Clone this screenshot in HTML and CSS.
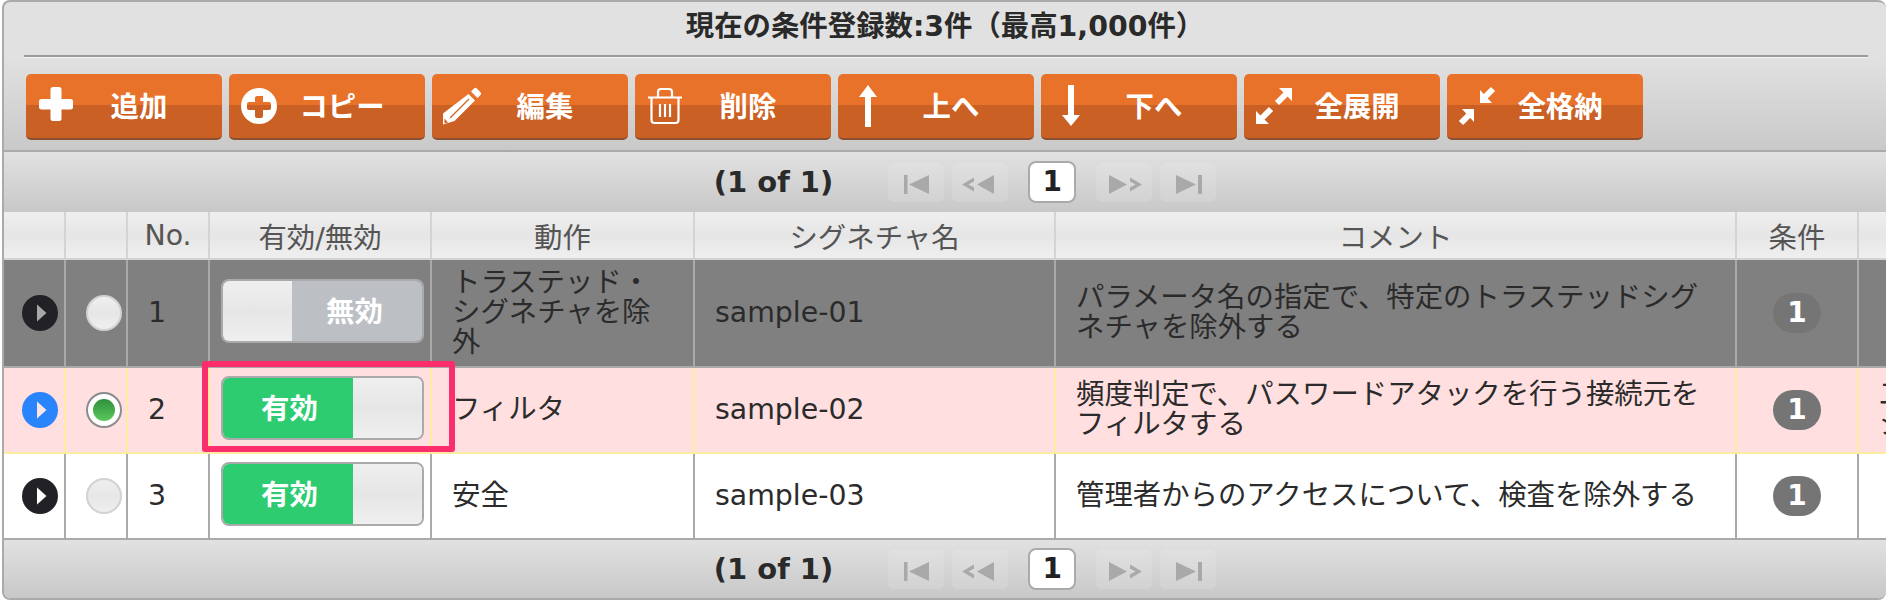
FILE: index.html
```html
<!DOCTYPE html>
<html lang="ja">
<head>
  <meta charset="UTF-8">
  <title>条件一覧</title>
  <link rel="stylesheet" href="styles.css">
</head>
<body>
  <svg class="defs" width="0" height="0">
    <symbol id="pg-first" viewBox="0 0 56 39"><path d="M16 12h3.500v19H16zM21 21.500 41 12v19z"/></symbol>
    <symbol id="pg-prev" viewBox="0 0 56 39"><path d="M42 12v19L25 21.500zM22 14.500l-12 7 12 7v-4l-5.500-3 5.500-3z"/></symbol>
    <symbol id="pg-next" viewBox="0 0 56 39"><path d="M13 12v19l18-9.500zM34 14.500l12 7-12 7v-4l5.500-3-5.500-3z"/></symbol>
    <symbol id="pg-last" viewBox="0 0 56 39"><path d="M16 12v19l20-9.500zM38 12h4v19h-4z"/></symbol>
    <symbol id="expander" viewBox="0 0 36 36"><circle cx="18" cy="18" r="18" fill="currentColor"/><path class="expander-arrow" d="M15 9.500l9.500 8.500-9.500 8.500z"/></symbol>
  </svg>

  <div class="panel">
    <h2 class="panel-title">現在の条件登録数:3件（最高1,000件）</h2>
    <div class="title-rule"></div>

    <div class="toolbar">
      <button class="btn">
        <svg class="btn-icon" viewBox="0 0 42 44"><rect x="4" y="15" width="34" height="10.500" rx="2.500"/><rect x="15.500" y="3" width="11" height="34" rx="2.500"/></svg>
        <span class="btn-label">追加</span>
      </button>
      <button class="btn">
        <svg class="btn-icon" viewBox="0 0 42 44"><path fill-rule="evenodd" d="M21 4a18 18 0 1 0 0 36a18 18 0 1 0 0-36zM17 12h8v6h6a2 2 0 0 1 2 2v4a2 2 0 0 1-2 2h-6v6a2 2 0 0 1-2 2h-4a2 2 0 0 1-2-2v-6h-6a2 2 0 0 1-2-2v-4a2 2 0 0 1 2-2h6v-4a2 2 0 0 1 2-2z"/></svg>
        <span class="btn-label">コピー</span>
      </button>
      <button class="btn">
        <svg class="btn-icon" viewBox="0 0 42 44"><path d="M33 4.500a2 2 0 0 1 2.800 0l3.700 3.700a2 2 0 0 1 0 2.800l-3 3-6.500-6.500zM27.500 10 34 16.500 13.500 37l-11.500 3.500V29.500z"/><path class="pencil-line" d="M28 15 9 34"/><path class="pencil-tip" d="M3.500 34.500l3.500 4-3.500 1z"/></svg>
        <span class="btn-label">編集</span>
      </button>
      <button class="btn">
        <svg class="btn-icon icon-line" viewBox="0 0 42 44"><path d="M4 13.500h34M14 13.500V8a3 3 0 0 1 3-3h8a3 3 0 0 1 3 3v5.500M7.500 13.500V36a3 3 0 0 0 3 3h21a3 3 0 0 0 3-3V13.500M16 20v13M21 20v13M26 20v13"/></svg>
        <span class="btn-label">削除</span>
      </button>
      <button class="btn">
        <svg class="btn-icon" viewBox="0 0 42 44"><path d="M21 1l9 12h-6v30h-6V13h-6z"/></svg>
        <span class="btn-label">上へ</span>
      </button>
      <button class="btn">
        <svg class="btn-icon" viewBox="0 0 42 44"><path d="M18 1h6v30h6l-9 11-9-11h6z"/></svg>
        <span class="btn-label">下へ</span>
      </button>
      <button class="btn">
        <svg class="btn-icon" viewBox="0 0 42 44"><path d="M26 4h13v13zM3 40V27l13 13z"/><path class="icon-shaft" d="M33 10l-9 9M9 34l9-9"/></svg>
        <span class="btn-label">全展開</span>
      </button>
      <button class="btn">
        <svg class="btn-icon" viewBox="0 0 42 44"><path d="M24 19V6l12 13zM18 25v13L6 25z"/><path class="icon-shaft" d="M28 14l9-9M14 30l-9 9"/></svg>
        <span class="btn-label">全格納</span>
      </button>
    </div>

    <div class="pager pager-top">
      <span class="pager-count">(1 of 1)</span>
      <span class="pg-btn"><svg><use href="#pg-first"/></svg></span>
      <span class="pg-btn"><svg><use href="#pg-prev"/></svg></span>
      <span class="pg-page">1</span>
      <span class="pg-btn"><svg><use href="#pg-next"/></svg></span>
      <span class="pg-btn"><svg><use href="#pg-last"/></svg></span>
    </div>

    <table class="rules">
      <colgroup>
        <col class="c-expand"><col class="c-radio"><col class="c-no"><col class="c-toggle">
        <col class="c-action"><col class="c-name"><col class="c-comment"><col class="c-cond"><col class="c-rest">
      </colgroup>
      <thead>
        <tr>
          <th></th><th></th><th>No.</th><th>有効/無効</th><th>動作</th><th>シグネチャ名</th><th>コメント</th><th>条件</th><th></th>
        </tr>
      </thead>
      <tbody>
        <tr class="row-off">
          <td class="cell-icon"><svg class="expander"><use href="#expander"/></svg></td>
          <td class="cell-radio"><span class="radio"></span></td>
          <td>1</td>
          <td class="cell-toggle">
            <div class="toggle"><span class="toggle-knob"></span><span class="toggle-off">無効</span></div>
          </td>
          <td>トラステッド・シグネチャを除外</td>
          <td>sample-01</td>
          <td>パラメータ名の指定で、特定のトラステッドシグネチャを除外する</td>
          <td class="cell-badge"><span class="badge">1</span></td>
          <td></td>
        </tr>
        <tr class="row-selected">
          <td class="cell-icon"><svg class="expander"><use href="#expander"/></svg></td>
          <td class="cell-radio"><span class="radio radio-on"></span></td>
          <td>2</td>
          <td class="cell-toggle">
            <div class="toggle"><span class="toggle-on">有効</span><span class="toggle-knob"></span></div>
          </td>
          <td>フィルタ</td>
          <td>sample-02</td>
          <td>頻度判定で、パスワードアタックを行う接続元をフィルタする</td>
          <td class="cell-badge"><span class="badge">1</span></td>
          <td>二段階で<br>シャット</td>
        </tr>
        <tr class="row-plain">
          <td class="cell-icon"><svg class="expander"><use href="#expander"/></svg></td>
          <td class="cell-radio"><span class="radio"></span></td>
          <td>3</td>
          <td class="cell-toggle">
            <div class="toggle"><span class="toggle-on">有効</span><span class="toggle-knob"></span></div>
          </td>
          <td>安全</td>
          <td>sample-03</td>
          <td>管理者からのアクセスについて、検査を除外する</td>
          <td class="cell-badge"><span class="badge">1</span></td>
          <td></td>
        </tr>
      </tbody>
    </table>

    <div class="pager pager-bottom">
      <span class="pager-count">(1 of 1)</span>
      <span class="pg-btn"><svg><use href="#pg-first"/></svg></span>
      <span class="pg-btn"><svg><use href="#pg-prev"/></svg></span>
      <span class="pg-page">1</span>
      <span class="pg-btn"><svg><use href="#pg-next"/></svg></span>
      <span class="pg-btn"><svg><use href="#pg-last"/></svg></span>
    </div>

    <!-- 赤枠の注釈 -->
    <div class="callout"></div>
  </div>
</body>
</html>
```

FILE: styles.css
```css
* {
  box-sizing: border-box;
}

body {
  margin: 0;
  background: #fff;
  overflow: hidden;
  font-family: "DejaVu Sans", "Noto Sans CJK JP", sans-serif;
  color: #2b2b2b;
}

.defs {
  position: absolute;
}

.panel {
  position: relative;
  width: 1884px;
  height: 600px;
  margin-left: 2px;
  border: 2px solid #aaa;
  border-right: 0;
  border-radius: 8px;
  overflow: hidden;
  background: #e1e1e1;
}

.panel-title {
  height: 53px;
  margin: 0;
  font-size: 28.400px;
  line-height: 50px;
  text-align: center;
  color: #2a2a2a;
}

.title-rule {
  height: 3px;
  margin: 0 18px 0 20px;
  border-top: 2px solid #9a9a9a;
  border-bottom: 1px solid #f4f4f4;
}

/* ツールバー */
.toolbar {
  display: flex;
  gap: 7px;
  height: 94px;
  padding: 16px 0 0 22px;
  border-bottom: 2px solid #aaa;
  background: linear-gradient(#e1e1e1, #c9c9c9);
}

.btn {
  display: flex;
  align-items: center;
  width: 196px;
  height: 66px;
  padding: 0 21px 0 9px;
  border: 0;
  border-bottom: 2px solid #8a5030;
  border-radius: 5px;
  background: linear-gradient(#e8722a 48%, #cb6024 48%);
  font-family: inherit;
  color: #fff;
}

.btn-icon {
  flex: none;
  width: 42px;
  height: 44px;
  fill: #fff;
}

.btn-label {
  flex: 1;
  font-size: 28.400px;
  font-weight: 700;
  text-align: center;
  margin-top: -4px;
}

.icon-line {
  fill: none;
  stroke: #fff;
  stroke-width: 2.200;
}

.icon-shaft {
  fill: none;
  stroke: #fff;
  stroke-width: 6;
}

.pencil-line {
  fill: none;
  stroke: #cf6424;
  stroke-width: 1.200;
}

.pencil-tip {
  fill: #cf6424;
}

/* ページャ */
.pager {
  display: flex;
  align-items: center;
  justify-content: center;
  padding-left: 40px;
  gap: 8px;
  background: linear-gradient(#e1e1e1, #c8c8c8);
}

.pager-top {
  height: 60px;
}

.pager-bottom {
  height: 58px;
}

.pager-count {
  margin-right: 47px;
  font-size: 29px;
  font-weight: 700;
  line-height: 1;
  color: #2a2a2a;
  padding-top: 1px;
}

.pg-btn {
  width: 56px;
  height: 39px;
  border-radius: 6px;
  background: rgba(255, 255, 255, 0.12);
}

.pg-btn svg {
  display: block;
  width: 56px;
  height: 39px;
  fill: #a9a9a9;
}

.pg-page {
  width: 48px;
  height: 42px;
  margin: 0 12px;
  border: 2px solid #aaa;
  border-radius: 8px;
  background: #fff;
  font-size: 28px;
  font-weight: 700;
  line-height: 38px;
  text-align: center;
  color: #222;
}

/* テーブル */
.rules {
  width: 2055px;
  table-layout: fixed;
  border-collapse: separate;
  border-spacing: 0;
}

.c-expand { width: 62px; }
.c-radio { width: 62px; }
.c-no { width: 82px; }
.c-toggle { width: 222px; }
.c-action { width: 263px; }
.c-name { width: 361px; }
.c-comment { width: 681px; }
.c-cond { width: 122px; }
.c-rest { width: 200px; }

.rules th {
  height: 48px;
  padding: 0;
  border-right: 2px solid #d4d4d4;
  border-bottom: 2px solid #d4d4d4;
  background: linear-gradient(#efefef, #e6e6e6 50%, #efefef);
  font-size: 28.400px;
  font-weight: 400;
  color: #555;
}

.rules td {
  padding: 0 20px;
  border-right: 2px solid #aaa;
  border-bottom: 2px solid #aaa;
  font-size: 28.400px;
  line-height: 30px;
  vertical-align: middle;
}

.row-off td {
  height: 108px;
  background: #808080;
}

.row-selected td {
  height: 86px;
  background: #ffdfdf;
  border-color: #fdeca0;
}

.row-plain td {
  height: 86px;
  background: #fff;
}

.rules .cell-icon {
  padding: 0 0 0 18px;
}

.rules .cell-radio {
  padding: 0 0 0 20px;
}

.rules .cell-toggle {
  padding: 0 0 0 11px;
}

.rules .cell-badge {
  padding: 0;
  text-align: center;
}

.expander {
  display: block;
  width: 36px;
  height: 36px;
  color: #222226;
}

.expander-arrow {
  fill: var(--arrow);
}

.row-off .expander { --arrow: #a8a8a8; }
.row-selected .expander { --arrow: #ffe6e6; color: #2a84fc; }
.row-plain .expander { --arrow: #fff; }

.radio {
  display: block;
  width: 36px;
  height: 36px;
  border: 2px solid #d2d2d2;
  border-radius: 50%;
  background: linear-gradient(#efefef, #e6e6e6 50%, #efefef);
}

.radio-on {
  padding: 5px;
  border-color: #8c8c8c;
  background: #fff;
}

.radio-on::after {
  content: "";
  display: block;
  width: 22px;
  height: 22px;
  border-radius: 50%;
  background: linear-gradient(#2e8f3c, #5cc85c);
}

/* 有効/無効スイッチ */
.toggle {
  display: flex;
  width: 203px;
  height: 64px;
  margin-top: -4px;
  border: 2px solid #aaa;
  border-radius: 8px;
  overflow: hidden;
  font-size: 28.400px;
  font-weight: 700;
  line-height: 64px;
  text-align: center;
  color: #fff;
}

.toggle-knob {
  width: 69px;
  background: linear-gradient(#efefef, #e6e6e6 50%, #efefef);
}

.toggle-on {
  width: 130px;
  padding-left: 3px;
  background: #2ecc71;
}

.toggle-off {
  flex: 1;
  padding-right: 5px;
  background: #bcc0c5;
}

.badge {
  display: inline-block;
  width: 48px;
  height: 40px;
  border-radius: 20px;
  background: #757575;
  font-size: 28px;
  font-weight: 700;
  line-height: 40px;
  color: #fff;
  vertical-align: middle;
}

.callout {
  position: absolute;
  left: 198px;
  top: 359px;
  width: 253px;
  height: 91px;
  border: 6px solid #fc2d6c;
  border-radius: 3px;
}
```
